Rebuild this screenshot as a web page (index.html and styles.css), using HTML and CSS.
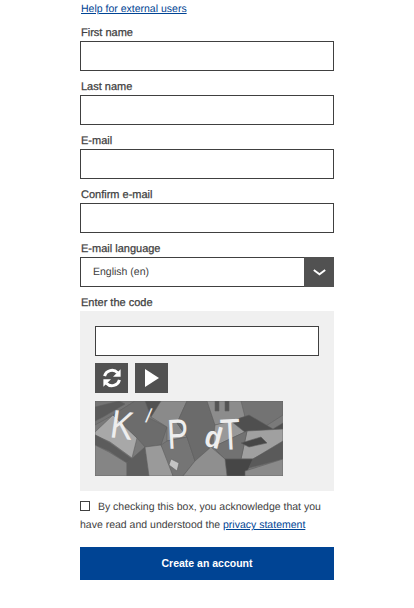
FILE: index.html
```html
<!DOCTYPE html>
<html lang="en">
<head>
<meta charset="utf-8">
<title>Create an account</title>
<link rel="stylesheet" href="styles.css">
</head>
<body>
<form class="form">
  <a class="help" href="#">Help for external users</a>
  <div class="field"><label class="label">First name</label><input class="input" type="text"></div>
  <div class="field"><label class="label">Last name</label><input class="input" type="text"></div>
  <div class="field"><label class="label">E-mail</label><input class="input" type="text"></div>
  <div class="field"><label class="label">Confirm e-mail</label><input class="input" type="text"></div>
  <div class="field">
    <label class="label">E-mail language</label>
    <div class="select">
      <span class="select-value">English (en)</span>
      <span class="select-btn">
        <svg width="13" height="7" viewBox="0 0 13 7"><path d="M0.8 1 6.5 5.2 12.2 1" fill="none" stroke="#fff" stroke-width="1.9"/></svg>
      </span>
    </div>
  </div>
  <div class="field">
    <label class="label">Enter the code</label>
    <div class="captcha">
      <input class="input captcha-input" type="text">
      <div class="captcha-btns">
        <span class="icon-btn">
          <svg width="20" height="20" viewBox="0 0 20 20"><g fill="none" stroke="#fff" stroke-width="3"><path d="M2.6 8.2A7.6 7.6 0 0 1 15.6 4.8"/><path d="M17.4 11.8A7.6 7.6 0 0 1 4.4 15.2"/></g><path d="M18.6 1.2V8.8H11Z" fill="#fff"/><path d="M1.4 18.8V11.2H9Z" fill="#fff"/></svg>
        </span>
        <span class="icon-btn">
          <svg width="14" height="18" viewBox="0 0 14 18"><path d="M0 0 14 9 0 18Z" fill="#fff"/></svg>
        </span>
      </div>
      <svg class="captcha-img" width="188" height="75" viewBox="0 0 188 75">
        <rect width="188" height="75" fill="#7a7a7a"/>
        <g class="cap-bg">
          <path d="M0 0H40L18 14 0 24Z" fill="#747474"/>
          <path d="M0 6 24 0 30 3 8 16 0 20Z" fill="#5a5a5a"/>
          <path d="M0 31 18 14 42 37 37 57 15 41 0 34Z" fill="#a8a8a8"/>
          <path d="M0 34 15 42 37 58 32 62 14 50 0 44Z" fill="#5c5c5c"/>
          <path d="M0 44 14 51 32 62 32 75H0Z" fill="#858585"/>
          <path d="M32 62 50 46 54 75H32Z" fill="#5e5e5e"/>
          <path d="M18 14 40 0H60L52 16 72 26 66 44 50 46 42 37Z" fill="#6c6c6c"/>
          <path d="M50 0H72L66 10 56 16Z" fill="#525252"/>
          <path d="M66 0H92L82 22 92 36 72 40 72 26 56 16Z" fill="#8a8a8a"/>
          <path d="M50 46 66 44 74 58 78 75H54Z" fill="#9a9a9a"/>
          <path d="M66 44 72 40 92 36 100 60 88 75H78Z" fill="#757575"/>
          <path d="M92 36 82 22 92 0H112L120 24 116 46 100 60Z" fill="#6b6b6b"/>
          <path d="M76 58 84 62 82 70 74 64Z" fill="#c4c4c4"/>
          <path d="M100 60 116 46 130 58 140 64 134 75H88Z" fill="#8f8f8f"/>
          <path d="M112 0H150V16L132 22 120 24Z" fill="#8c8c8c"/>
          <path d="M120 0H124V10H120ZM130 0H134V10H130Z" fill="#545454"/>
          <path d="M146 0H188V14L160 32 136 20 150 16Z" fill="#737373"/>
          <path d="M120 24 136 20 152 30 118 46Z" fill="#999"/>
          <path d="M136 20 154 14 178 28 188 22V30L156 36Z" fill="#4f4f4f"/>
          <path d="M152 30 188 28V42L158 58 146 58Z" fill="#a0a0a0"/>
          <path d="M118 46 152 30 146 58 130 58Z" fill="#727272"/>
          <path d="M146 42 166 36 172 42 154 46Z" fill="#474747"/>
          <path d="M158 58 188 40V58L150 68Z" fill="#5a5a5a"/>
          <path d="M130 58 158 58 150 75H132Z" fill="#464646"/>
          <path d="M150 70 188 58V75H150Z" fill="#8a8a8a"/>
        </g>
        <text class="cap cap-k" transform="translate(14 36) rotate(8) scale(.85 1)">K</text>
        <text class="cap cap-s" transform="translate(50 21) rotate(8)">/</text>
        <text class="cap cap-p" transform="translate(73 48) rotate(-3) scale(.75 1)">P</text>
        <text class="cap cap-d" transform="translate(108 44) rotate(15) scale(.9 1)">d</text>
        <text class="cap cap-t" transform="translate(126 49) rotate(-3) scale(.75 1)">T</text>
      </svg>
    </div>
  </div>
  <p class="consent"><input class="check" type="checkbox"> By checking this box, you acknowledge that you have read and understood the <a href="#">privacy statement</a></p>
  <button class="submit" type="button">Create an account</button>
</form>
</body>
</html>
```
FILE: styles.css
```css
html, body { margin: 0; padding: 0; background: #fff; }
body { font-family: "Liberation Sans", Arial, sans-serif; color: #404040; height: 608px; overflow: hidden; text-rendering: geometricPrecision; }
.form { width: 254px; margin-left: 80px; display: flex; flex-direction: column; }
a { color: #004494; }
.help { font-size: 10.5px; line-height: 16px; margin: 1px 0 0 1px; align-self: flex-start; }
.field { display: flex; flex-direction: column; }
.label { font-size: 11px; line-height: 16px; padding: 8px 0 0 1px; -webkit-text-stroke: 0.25px #404040; }
.input { box-sizing: border-box; display: block; width: 254px; height: 30px; margin: 0; padding: 0 8px; border: 1px solid #404040; border-radius: 0; background: #fff; }
.select { box-sizing: border-box; display: flex; height: 30px; border: 1px solid #404040; border-right: 0; background: #fff; }
.select-value { flex: 1; font-size: 10.5px; line-height: 28px; padding-left: 12px; }
.select-btn { width: 30px; margin-top: -1px; margin-bottom: -1px; background: #515151; display: flex; align-items: center; justify-content: center; }
.captcha { background: #f0f0f0; height: 180px; box-sizing: border-box; padding: 15px; display: flex; flex-direction: column; align-items: flex-start; }
.captcha-input { width: 224px; }
.captcha-btns { display: flex; gap: 7px; margin-top: 7px; }
.icon-btn { width: 33px; height: 30px; background: #515151; display: flex; align-items: center; justify-content: center; }
.captcha-img { display: block; margin-top: 8px; }
.cap-bg { stroke: #5f5f5f; stroke-width: 0.6; filter: blur(0.3px); }
.cap { fill: #eeeeee; font-family: "Liberation Sans", sans-serif; }
.cap-k { font-size: 40px; }
.cap-s { font-size: 20px; }
.cap-p { font-size: 42px; }
.cap-d { font-size: 30px; font-weight: 700; }
.cap-t { font-size: 44px; }
.consent { margin: 7px 0 0; font-size: 10.5px; line-height: 18px; width: 254px; height: 36px; }
.check { width: 8px; height: 8px; margin: 0 5px 0 0; appearance: none; -webkit-appearance: none; border: 1px solid #404040; background: #fff; box-sizing: content-box; vertical-align: -1px; }
.submit { display: block; width: 254px; height: 33px; margin-top: 13px; padding: 0 0 1px; border: 0; background: #004494; color: #fff; font: 700 10.5px "Liberation Sans", Arial, sans-serif; }
```
